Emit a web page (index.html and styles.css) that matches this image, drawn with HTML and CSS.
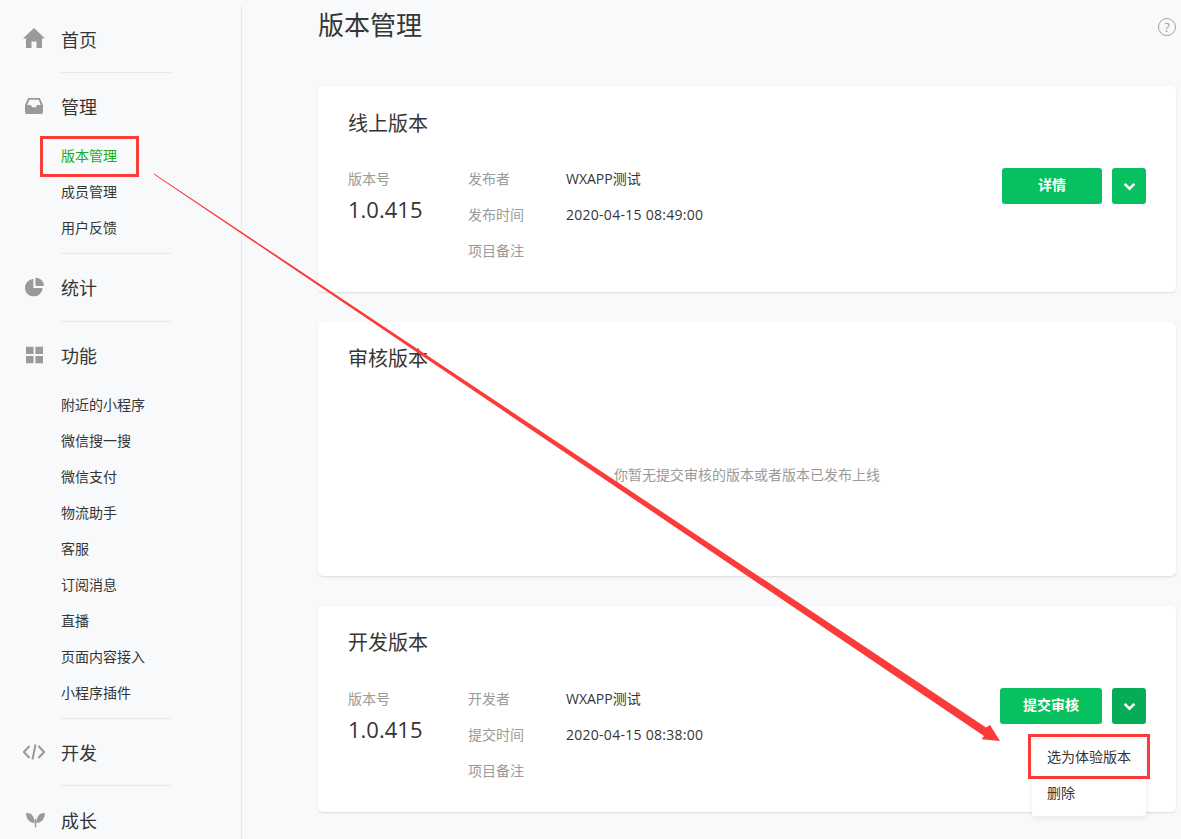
FILE: index.html
```html
<!DOCTYPE html>
<html lang="zh">
<head>
<meta charset="utf-8">
<title>版本管理</title>
<link rel="stylesheet" href="styles.css">
</head>
<body>
<div class="app">
  <aside class="sidebar">
    <section class="group group-home">
      <div class="head">
        <svg class="icon" viewBox="0 0 22 20"><path d="M11 0 L22 10.500 H19 V20 H13.500 V13.500 H8.500 V20 H3 V10.500 H0 Z"/></svg>
        <span>首页</span>
      </div>
    </section>
    <section class="group group-manage">
      <div class="head">
        <svg class="icon" viewBox="0 0 20 18"><path fill-rule="evenodd" d="M3.500 0 H16.500 L20 8 V16 Q20 18 18 18 H2 Q0 18 0 16 V8 Z M4.800 2 L2.500 8 H6.500 L8 10.500 H12 L13.500 8 H17.500 L15.200 2 Z"/></svg>
        <span>管理</span>
      </div>
      <ul class="sub">
        <li class="active">版本管理</li>
        <li>成员管理</li>
        <li>用户反馈</li>
      </ul>
    </section>
    <section class="group group-stat">
      <div class="head">
        <svg class="icon" viewBox="0 0 20 20"><path d="M8.800 1.500 V11 H18.500 A9.300 9.300 0 1 1 8.800 1.500 Z M11 0 A9 9 0 0 1 20 9 H11 Z"/></svg>
        <span>统计</span>
      </div>
    </section>
    <section class="group group-func">
      <div class="head">
        <svg class="icon" viewBox="0 0 18 18"><path d="M0 0 H8 V8 H0 Z M10 0 H18 V8 H10 Z M0 10 H8 V18 H0 Z M10 10 H18 V18 H10 Z"/></svg>
        <span>功能</span>
      </div>
      <ul class="sub">
        <li>附近的小程序</li>
        <li>微信搜一搜</li>
        <li>微信支付</li>
        <li>物流助手</li>
        <li>客服</li>
        <li>订阅消息</li>
        <li>直播</li>
        <li>页面内容接入</li>
        <li>小程序插件</li>
      </ul>
    </section>
    <section class="group group-dev">
      <div class="head">
        <svg class="icon icon-line" viewBox="0 0 22 16"><path d="M6.500 2 L1 8 L6.500 14 M15.500 2 L21 8 L15.500 14 M12.500 0.500 L9.500 15.500"/></svg>
        <span>开发</span>
      </div>
    </section>
    <section class="group group-grow">
      <div class="head">
        <svg class="icon" viewBox="0 0 20 16"><path d="M0 0.500 C5 0 8.800 3 9 11 C3.500 11 0 7 0 0.500 Z M20 0.500 C15 0 11.200 3 11 11 C16.500 11 20 7 20 0.500 Z M9.200 7 H10.800 V16 H9.200 Z"/></svg>
        <span>成长</span>
      </div>
    </section>
  </aside>

  <main class="main">
    <header class="page-head">
      <h1>版本管理</h1>
      <div class="help">?</div>
    </header>

    <section class="card card-online">
      <h2>线上版本</h2>
      <div class="row">
        <div class="ver"><div class="label">版本号</div><div class="num">1.0.415</div></div>
        <dl class="meta">
          <dt>发布者</dt><dd>WXAPP测试</dd>
          <dt>发布时间</dt><dd class="time">2020-04-15 08:49:00</dd>
          <dt>项目备注</dt><dd></dd>
        </dl>
        <div class="actions">
          <button class="btn btn-wide">详情</button>
          <button class="btn btn-drop"><svg viewBox="0 0 12 8"><path d="M1.500 1.500 L6 6 L10.500 1.500"/></svg></button>
        </div>
      </div>
    </section>

    <section class="card card-review">
      <h2>审核版本</h2>
      <p class="empty">你暂无提交审核的版本或者版本已发布上线</p>
    </section>

    <section class="card card-dev">
      <h2>开发版本</h2>
      <div class="row">
        <div class="ver"><div class="label">版本号</div><div class="num">1.0.415</div></div>
        <dl class="meta">
          <dt>开发者</dt><dd>WXAPP测试</dd>
          <dt>提交时间</dt><dd class="time">2020-04-15 08:38:00</dd>
          <dt>项目备注</dt><dd></dd>
        </dl>
        <div class="actions">
          <button class="btn btn-wider">提交审核</button>
          <button class="btn btn-drop btn-open"><svg viewBox="0 0 12 8"><path d="M1.500 1.500 L6 6 L10.500 1.500"/></svg></button>
        </div>
      </div>
      <ul class="menu">
        <li>选为体验版本</li>
        <li>删除</li>
      </ul>
    </section>
  </main>
</div>

<svg class="annot" viewBox="0 0 1181 839">
  <rect class="mark" x="41.500" y="137.500" width="96" height="38"/>
  <rect class="mark" x="1029.500" y="735.500" width="119" height="42"/>
  <polygon class="arrow" points="154,173.600 986,727.500 990,725 1000,741 981.700,739.300 984,736 154,174.400"/>
</svg>
</body>
</html>
```

FILE: styles.css
```css
* { box-sizing: border-box; }
html, body { margin: 0; padding: 0; height: 839px; overflow: hidden; }
body {
  background: #f8f9fb;
  color: #353535;
  font-family: "Open Sans", "Noto Sans CJK SC", sans-serif;
}
.app { display: flex; height: 839px; }

.sidebar {
  width: 242px;
  flex: none;
  margin-top: 6px;
  padding-left: 61px;
  border-right: 1px solid #e7e7eb;
  overflow: hidden;
}
.group { border-bottom: 1px solid #e7e8ea; width: 110px; }
.group-grow { border-bottom: 0; }
.head {
  position: relative;
  display: flex;
  align-items: center;
  height: 32px;
  font-size: 18px;
  color: #353535;
  white-space: nowrap;
}
.icon {
  position: absolute;
  left: -38px;
  top: 50%;
  transform: translateY(-50%);
  fill: #9a9a9a;
}
.icon-line { fill: none; stroke: #9a9a9a; stroke-width: 2; }
.group-home { padding: 17px 0; }
.group-home .icon { width: 22px; height: 20px; left: -38px; top: 15px; }
.group-manage { padding: 16px 0 7px; }
.group-manage .head { height: 34px; }
.group-manage .icon { width: 18px; height: 17px; left: -36px; }
.group-stat { padding: 17px 0 18px; }
.group-stat .icon { width: 19px; height: 19px; left: -36px; }
.group-func { padding: 17px 0 7px; }
.group-func .icon { width: 17px; height: 17px; left: -35px; }
.group-dev { padding: 17px 0; }
.group-dev .icon { width: 22px; height: 16px; left: -38px; }
.group-grow { padding: 18px 0 0; }
.group-grow .icon { width: 19px; height: 15px; left: -35px; }

.sub { list-style: none; margin: 0; padding: 15px 0 0; }
.group-func .sub { padding-top: 16px; }
.sub li {
  height: 36px;
  line-height: 36px;
  font-size: 14px;
  color: #353535;
  white-space: nowrap;
}
.sub li.active { color: #1aad19; }

.main { flex: 1; padding: 0 5px 0 76px; min-width: 0; }
.page-head {
  display: flex;
  align-items: center;
  justify-content: space-between;
  height: 86px;
  padding-bottom: 36px;
}
h1 { margin: 0; font-size: 26px; font-weight: 400; color: #353535; line-height: 50px; }
.help {
  width: 18px;
  height: 18px;
  margin-top: 4px;
  border: 1px solid #a3a3a3;
  border-radius: 50%;
  color: #a3a3a3;
  font-size: 13px;
  line-height: 16px;
  text-align: center;
}

.card {
  position: relative;
  background: #fff;
  border-radius: 5px;
  box-shadow: 0 1px 2px rgba(150,150,150,0.3);
  margin-bottom: 30px;
  padding: 20px 30px 0;
}
.card-online, .card-dev { height: 206px; }
.card-review { height: 254px; }
h2 { margin: 0; font-size: 20px; font-weight: 400; color: #353535; line-height: 34px; }
.card-online h2 { margin-top: 1px; margin-bottom: -1px; }

.row { display: flex; margin-top: 21px; }
.ver { width: 120px; flex: none; }
.label { font-size: 14px; color: #9a9a9a; line-height: 36px; height: 36px; }
.num { font-size: 22px; color: #353535; line-height: 26px; margin-top: -1px; }
.meta {
  display: grid;
  grid-template-columns: 98px auto;
  grid-auto-rows: 36px;
  margin: 0;
  flex: none;
  line-height: 36px;
  font-size: 14px;
}
.meta dt { color: #9a9a9a; }
.meta dd { margin: 0; color: #353535; }
.meta .time { letter-spacing: 0.27px; }

.actions { margin-left: auto; display: flex; gap: 10px; margin-top: 7px; }
.btn {
  height: 36px;
  border: 0;
  border-radius: 3px;
  background: #07c160;
  color: #fff;
  font: 700 14px/34px "Open Sans", "Noto Sans CJK SC", sans-serif;
  padding: 0 0 2px;
}
.btn-wide { width: 100px; }
.btn-wider { width: 102px; }
.btn-drop { width: 34px; padding: 0; display: flex; align-items: center; justify-content: center; }
.btn-drop svg { width: 13px; height: 9px; fill: none; stroke: #fff; stroke-width: 2.300; }
.btn-open { background: #06ad56; }

.empty {
  margin: 0;
  position: absolute;
  left: 0; right: 0; top: 143px;
  text-align: center;
  font-size: 14px;
  line-height: 20px;
  color: #9a9a9a;
}

.menu {
  position: absolute;
  list-style: none;
  margin: 0;
  padding: 0 0 5px;
  left: 714px;
  top: 133px;
  width: 114px;
  background: #fff;
  border-radius: 3px;
  box-shadow: 0 2px 6px rgba(0,0,0,0.08);
}
.menu li { height: 36px; line-height: 36px; padding-left: 15px; font-size: 14px; color: #353535; white-space: nowrap; }

.annot { position: absolute; left: 0; top: 0; width: 1181px; height: 839px; pointer-events: none; }
.mark { fill: none; stroke: #fb3a3a; stroke-width: 3; }
.arrow { fill: #fb3a3a; }
```
